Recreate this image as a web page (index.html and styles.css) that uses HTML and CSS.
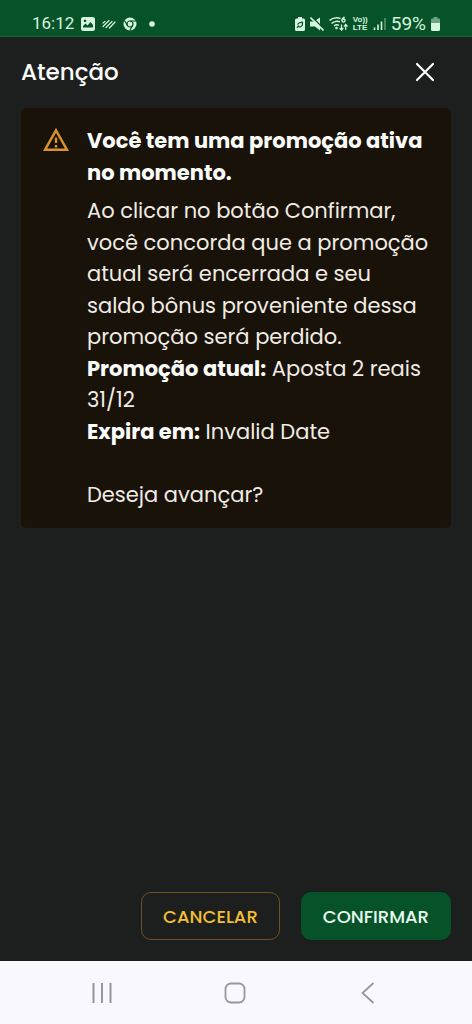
FILE: index.html
```html
<!DOCTYPE html>
<html lang="pt-BR">
<head>
<meta charset="utf-8">
<meta name="viewport" content="width=device-width, initial-scale=1">
<title>Atenção</title>
<link rel="stylesheet" href="styles.css">
</head>
<body>
<div class="screen">
  <div class="status">
    <div class="status-group">
      <span class="status-text clock">16:12</span>
      <svg width="14" height="14" viewBox="0 0 14 14"><path fill="currentColor" fill-rule="evenodd" d="M2.500 0h9A2.500 2.500 0 0 1 14 2.500v9a2.500 2.500 0 0 1-2.500 2.500h-9A2.500 2.500 0 0 1 0 11.500v-9A2.500 2.500 0 0 1 2.500 0zM2 10.500h10V8L9.500 5 6.500 8.500 4.500 6.500 2 9zM4 2.500a1.300 1.300 0 1 0 .01 0z"/></svg>
      <svg width="14" height="12" viewBox="0 0 14 12" fill="none" stroke="currentColor" stroke-width="1.200" stroke-linecap="round"><path d="M1 5 3 3.500M1 8.500 7 2.500M4 9.500l6-6M7.500 10l5.500-6"/></svg>
      <svg width="14" height="14" viewBox="0 0 14 14"><circle cx="7" cy="7" r="6.500" fill="currentColor"/><g fill="none" stroke="#06532a" stroke-width="1.200"><circle cx="7" cy="7" r="3"/><path d="M7 4h6M4.400 8.500 1.500 3.500M9.600 8.500 6.800 13.500"/></g></svg>
      <svg class="dot" width="6" height="6" viewBox="0 0 6 6"><circle cx="3" cy="3" r="2.800" fill="currentColor"/></svg>
    </div>
    <div class="status-group status-right">
      <svg width="10" height="14" viewBox="0 0 10 14"><path fill="currentColor" d="M3 0h4v1.500h1.500A1.500 1.500 0 0 1 10 3v9.500A1.500 1.500 0 0 1 8.500 14h-7A1.500 1.500 0 0 1 0 12.500V3a1.500 1.500 0 0 1 1.500-1.500H3z"/><path d="M2.500 7.500Q4 5.200 7.500 5.200 7.800 10 4.500 9.800 3.200 9.500 3.500 8.500L2 11" fill="none" stroke="#06532a" stroke-width="1.200"/></svg>
      <svg width="14" height="14" viewBox="0 0 14 14"><path fill="currentColor" d="M0 4.500h4l6-4v13L5 9.500H0z"/><path d="m1.500-.5 13 13" stroke="#06532a" stroke-width="1.500"/><path d="m.5.500 13 13" stroke="currentColor" stroke-width="1.600"/></svg>
      <svg width="19" height="15" viewBox="0 0 19 15" fill="none" stroke="currentColor" stroke-width="1.500"><path d="M.5 4.500Q5.500.500 11.500 2.500M2.500 7.500Q6.500 4 11 5.800M5 10Q7.500 7.800 10 9.500"/><circle cx="7.500" cy="12" r=".6"/><path d="M15.500 1Q13 2.500 13 4.500"/><circle cx="14.500" cy="4.500" r="1.500"/><path stroke-width="1.200" d="M12.500 8.500V14m-1.800-2 1.800 2 1.800-2M16.700 14V8.500m-1.800 2 1.800-2 1.800 2"/></svg>
      <span class="volte"><span>Vo))</span><span>LTE</span></span>
      <svg width="13" height="13" viewBox="0 0 13 13" fill="none" stroke="currentColor" stroke-width="1.600"><path d="M1.500 10.500V13M5 7.500V13M8.500 4.500V13"/><path d="M12 1v12" opacity=".4"/></svg>
      <span class="status-text">59%</span>
      <svg width="9" height="14" viewBox="0 0 9 14"><path opacity=".5" fill="currentColor" d="M2.500 0h4v1.500H8a1 1 0 0 1 1 1V6H0V2.500a1 1 0 0 1 1-1h1.500z"/><path fill="currentColor" d="M0 6h9v6.500A1.500 1.500 0 0 1 7.500 14h-6A1.500 1.500 0 0 1 0 12.500z"/></svg>
    </div>
  </div>

  <main class="dialog" role="dialog" aria-labelledby="dialog-title">
    <header class="dialog-header">
      <h1 id="dialog-title" class="dialog-title">Atenção</h1>
      <button class="close" type="button" aria-label="Fechar">
        <svg width="20" height="20" viewBox="0 0 20 20" fill="none" stroke="currentColor" stroke-width="2.200" stroke-linecap="round"><path d="m2 2 16 16M18 2 2 18"/></svg>
      </button>
    </header>

    <section class="alert">
      <svg class="alert-icon" width="28" height="26" viewBox="0 0 28 26"><path fill="none" stroke="currentColor" stroke-width="2.400" d="M14 3.300 25 22.800H3z"/><path fill="none" stroke="currentColor" stroke-width="2.400" d="M14 10.500v5.500M14 18v2.400"/></svg>
      <div class="alert-body">
        <h2 class="alert-title">Você tem uma promoção ativa no momento.</h2>
        <p>Ao clicar no botão Confirmar, você concorda que a promoção atual será encerrada e seu saldo bônus proveniente dessa promoção será perdido.<br>
        <strong>Promoção atual:</strong> Aposta 2 reais 31/12<br>
        <strong>Expira em:</strong> Invalid Date<br>
        <br>
        Deseja avançar?</p>
      </div>
    </section>

    <footer class="actions">
      <button class="button button-outline" type="button">CANCELAR</button>
      <button class="button button-solid" type="button">CONFIRMAR</button>
    </footer>
  </main>

  <nav class="navbar">
    <button class="nav-button" type="button" aria-label="Recentes"><svg width="22" height="22" viewBox="0 0 22 22" fill="none" stroke="currentColor" stroke-width="2"><path d="M2.500 1v20M11 1v20M19.500 1v20"/></svg></button>
    <button class="nav-button" type="button" aria-label="Início"><svg width="22" height="22" viewBox="0 0 22 22" fill="none" stroke="currentColor" stroke-width="1.800"><rect x="1.500" y="1.500" width="19" height="19" rx="5.500"/></svg></button>
    <button class="nav-button" type="button" aria-label="Voltar"><svg width="22" height="22" viewBox="0 0 22 22" fill="none" stroke="currentColor" stroke-width="1.800"><path d="M16.500 1 5.500 11l11 10"/></svg></button>
  </nav>
</div>
</body>
</html>
```
FILE: styles.css
```css
* {
  box-sizing: border-box;
}

body {
  margin: 0;
  background: #1d1f1e;
  color: #fff;
  font-family: Poppins, Inter, "Open Sans", sans-serif;
}

h1, h2, p {
  margin: 0;
}

svg {
  display: block;
  flex: none;
}

button {
  font-family: inherit;
  padding: 0;
  border: 0;
  background: none;
  cursor: pointer;
}

.screen {
  min-height: 100vh;
  display: flex;
  flex-direction: column;
}

.status {
  display: flex;
  justify-content: space-between;
  padding: 12px 32px 1px;
  background: #06532a;
  border-bottom: 1px solid #1d5c37;
  color: #d5f5df;
}

.status-group {
  display: flex;
  align-items: center;
  gap: 7px;
}

.status-right {
  gap: 5px;
}

.status-text {
  font-family: Roboto, sans-serif;
  font-size: 19px;
  line-height: 23px;
}

.clock {
  font-size: 17px;
}

.dot {
  margin-left: 5px;
}

.volte {
  display: flex;
  flex-direction: column;
  font-family: "Liberation Sans", sans-serif;
  font-size: 8px;
  font-weight: 700;
  line-height: 8px;
}

.dialog {
  flex: 1;
  display: flex;
  flex-direction: column;
  padding: 17px 21px 21px;
}

.dialog-header {
  display: flex;
  align-items: center;
  justify-content: space-between;
  padding-right: 16px;
  margin-bottom: 18px;
}

.dialog-title {
  font-size: 23px;
  font-weight: 500;
  line-height: 36px;
}

.close {
  color: #fff;
}

.alert {
  display: flex;
  align-items: flex-start;
  gap: 17px;
  padding: 17px 21px 18px;
  border-radius: 5px;
  background: #191208;
}

.alert-icon {
  margin-top: 2px;
  color: #da922f;
}

.alert-body {
  flex: 1;
  font-size: 21px;
  line-height: 1.5;
  color: #f0ece4;
}

.alert-title {
  margin-bottom: 7px;
  font-size: 21px;
  font-weight: 700;
  color: #fff;
}

.alert-body strong {
  color: #fff;
}

.actions {
  display: flex;
  justify-content: flex-end;
  gap: 21px;
  margin-top: auto;
}

.button {
  height: 48px;
  padding: 0 21px;
  border: 1px solid transparent;
  border-radius: 10px;
  font-size: 18px;
  font-weight: 500;
}

.button-outline {
  border-color: #6a5424;
  color: #f2be33;
}

.button-solid {
  background: #06532a;
  color: #e9fbef;
}

.navbar {
  display: flex;
  justify-content: space-around;
  padding: 0 38px 0 36px;
  background: #f9f8fe;
}

.nav-button {
  display: flex;
  align-items: center;
  justify-content: center;
  width: 63px;
  height: 63px;
  color: #96969c;
}
```
